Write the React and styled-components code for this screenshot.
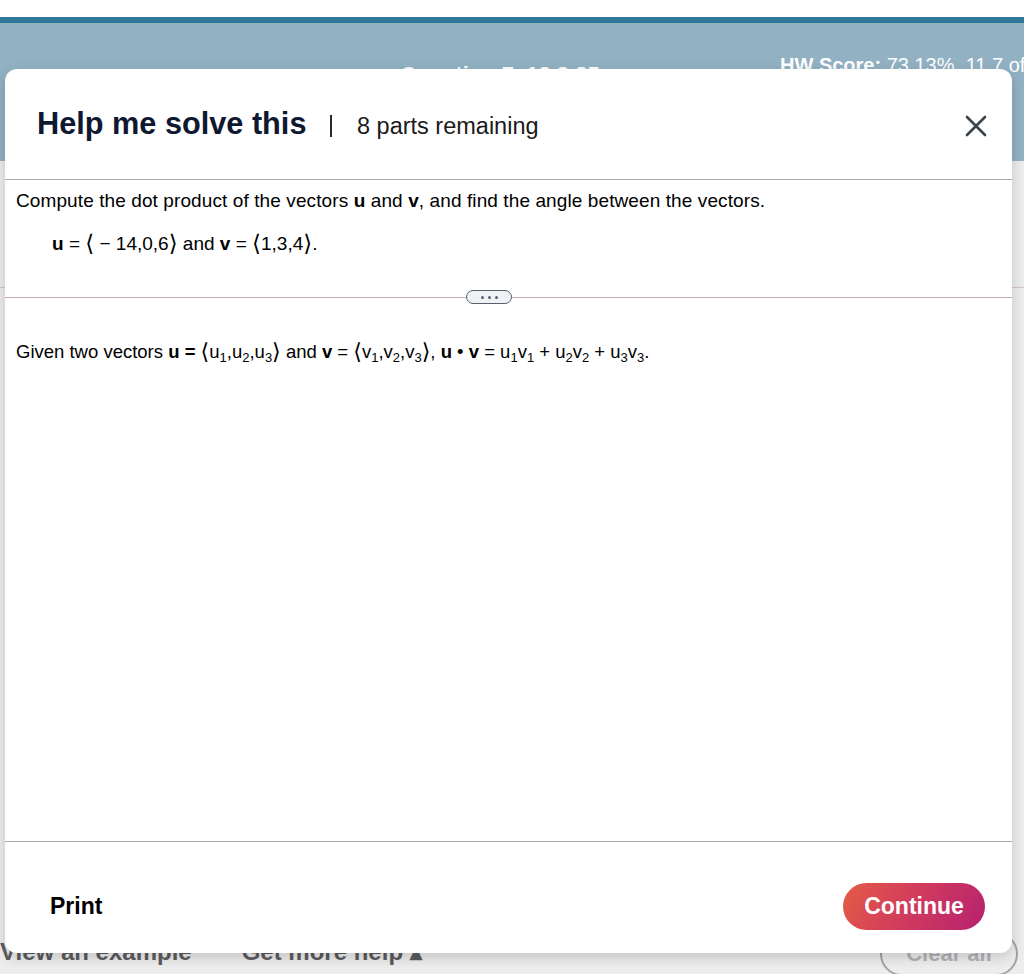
import React from 'react';
import styled, { createGlobalStyle } from 'styled-components';

const GlobalStyle = createGlobalStyle`
  html, body { margin: 0; padding: 0; }
  body {
    font-family: "Liberation Sans", Arial, Helvetica, sans-serif;
    background: #ffffff;
  }
`;

const Page = styled.div`
  position: relative;
  width: 1024px;
  height: 974px;
  overflow: hidden;
  display: flex;
  flex-direction: column;
  background: #ededee;
`;

const TopStrip = styled.div`
  flex: none;
  height: 17px;
  background: #ffffff;
`;

const AccentBar = styled.div`
  flex: none;
  height: 6px;
  background: #2f7898;
`;

const HeaderBand = styled.header`
  flex: none;
  height: 138px;
  background: #92b2c4;
  display: grid;
  grid-template-columns: 380px 240px 1fr;
  align-items: start;
  padding-top: 31px;
  box-sizing: border-box;
  color: #ffffff;
  white-space: nowrap;
  overflow: hidden;
`;

const QuestionTitle = styled.div`
  grid-column: 2;
  justify-self: center;
  margin-top: 8px;
  font-size: 22px;
  font-weight: bold;
`;

const Score = styled.div`
  grid-column: 3;
  padding-left: 160px;
  font-size: 20px;
  overflow: hidden;
  b { font-weight: bold; }
`;

const Content = styled.main`
  flex: 1;
  display: flex;
  flex-direction: column;
  padding-top: 126px;
`;

const BgDivider = styled.div`
  height: 1px;
  background: #d6c4cb;
`;

const BottomBar = styled.div`
  margin-top: auto;
  height: 42px;
  display: flex;
  align-items: flex-start;
  padding: 0 6px 0 0;
  white-space: nowrap;
`;

const BgLink = styled.span`
  font-size: 24px;
  font-weight: bold;
  color: #5c5c5e;
  margin-top: 6px;
  margin-left: ${p => p.$ml || 0}px;
`;

const ClearButton = styled.span`
  margin-left: auto;
  width: 138px;
  height: 44px;
  box-sizing: border-box;
  border: 2px solid #a3a3a5;
  border-radius: 22px;
  color: #b4b4b6;
  font-size: 22px;
  font-weight: bold;
  display: flex;
  align-items: center;
  justify-content: center;
`;

const Modal = styled.div`
  position: absolute;
  top: 69px;
  left: 5px;
  width: 1007px;
  height: 884px;
  background: #ffffff;
  border-radius: 12px;
  box-shadow: 0 4px 14px rgba(0, 0, 0, 0.18);
  display: flex;
  flex-direction: column;
  overflow: hidden;
`;

const ModalHeader = styled.div`
  flex: none;
  height: 111px;
  box-sizing: border-box;
  border-bottom: 1px solid #a9a9b3;
  display: flex;
  align-items: center;
  padding: 0 24px 0 32px;
`;

const Title = styled.h2`
  margin: 0;
  font-size: 30.7px;
  font-weight: bold;
  color: #0e1830;
`;

const Separator = styled.span`
  width: 1.5px;
  height: 22px;
  background: #2a2a2a;
  margin: 4px 25px 0 24px;
`;

const Remaining = styled.span`
  font-size: 23.5px;
  color: #1a1a1a;
  margin-top: 4px;
`;

const CloseButton = styled.button`
  margin-left: auto;
  margin-top: 4px;
  border: 0;
  background: transparent;
  padding: 0;
  width: 24px;
  height: 24px;
  display: flex;
  align-items: center;
  justify-content: center;
  cursor: pointer;
`;

const ModalBody = styled.div`
  flex: 1;
  display: flex;
  flex-direction: column;
`;

const QuestionSection = styled.section`
  position: relative;
  height: 118px;
  box-sizing: border-box;
  border-bottom: 1px solid #c4a9b4;
  padding: 10px 0 0 11px;
  color: #000;
`;

const Prompt = styled.p`
  margin: 0;
  font-size: 19px;
  letter-spacing: 0.1px;
  line-height: 22px;
  white-space: nowrap;
`;

const MathLine = styled.p`
  margin: 20px 0 0 36px;
  font-size: 19px;
  line-height: 24px;
  white-space: nowrap;
`;

const Bracket = styled.span`
  font-family: "DejaVu Sans", sans-serif;
  font-size: 1.2em;
  font-weight: normal;
  line-height: 0;
  vertical-align: -1px;
`;

const MorePill = styled.span`
  position: absolute;
  left: 461px;
  bottom: -7px;
  width: 46px;
  height: 14px;
  box-sizing: border-box;
  border: 1.5px solid #596170;
  border-radius: 7px;
  background: #eff1f4;
  display: flex;
  align-items: center;
  justify-content: center;
  gap: 4px;
`;

const Dot = styled.i`
  width: 3px;
  height: 3px;
  border-radius: 50%;
  background: #596170;
`;

const HintSection = styled.p`
  margin: 0;
  padding: 42px 0 0 11px;
  font-size: 18.5px;
  line-height: 24px;
  color: #000;
  white-space: nowrap;

  sub {
    font-size: 13px;
    vertical-align: -4px;
    line-height: 0;
  }
`;

const ModalFooter = styled.footer`
  flex: none;
  height: 112px;
  box-sizing: border-box;
  border-top: 1px solid #a9a9b3;
  display: flex;
  align-items: center;
  justify-content: space-between;
  padding: 17px 27px 0 45px;
`;

const PrintButton = styled.button`
  border: 0;
  background: transparent;
  padding: 0;
  font-family: inherit;
  font-size: 23px;
  font-weight: bold;
  color: #000;
  cursor: pointer;
`;

const ContinueButton = styled.button`
  width: 142px;
  height: 47px;
  border: 0;
  border-radius: 24px;
  background: linear-gradient(120deg, #e45c45 0%, #d03a5e 50%, #b5216f 100%);
  color: #ffffff;
  font-family: inherit;
  font-size: 23px;
  font-weight: bold;
  cursor: pointer;
`;

const L = () => <Bracket>⟨</Bracket>;
const R = () => <Bracket>⟩</Bracket>;

export default function App() {
  return (
    <>
      <GlobalStyle />
      <Page>
        <TopStrip />
        <AccentBar />
        <HeaderBand>
          <QuestionTitle>Question 7, 12.3.25</QuestionTitle>
          <Score><b>HW Score:</b> 73.13%, 11.7 of 16 points</Score>
        </HeaderBand>
        <Content>
          <BgDivider />
          <BottomBar>
            <BgLink>View an example</BgLink>
            <BgLink $ml={50}>Get more help ▴</BgLink>
            <ClearButton>Clear all</ClearButton>
          </BottomBar>
        </Content>

        <Modal role="dialog" aria-label="Help me solve this">
          <ModalHeader>
            <Title>Help me solve this</Title>
            <Separator />
            <Remaining>8 parts remaining</Remaining>
            <CloseButton aria-label="Close">
              <svg width="22" height="22" viewBox="0 0 22 22">
                <path d="M2 2 L20 20 M20 2 L2 20" stroke="#3b424d" strokeWidth="2.6" strokeLinecap="round" />
              </svg>
            </CloseButton>
          </ModalHeader>
          <ModalBody>
            <QuestionSection>
              <Prompt>
                Compute the dot product of the vectors <b>u</b> and <b>v</b>, and find the angle between the vectors.
              </Prompt>
              <MathLine>
                <b>u</b> = <L /> − 14,0,6<R /> and <b>v</b> = <L />1,3,4<R />.
              </MathLine>
              <MorePill><Dot /><Dot /><Dot /></MorePill>
            </QuestionSection>
            <HintSection>
              Given two vectors <b>u</b> <b>=</b> <L />u<sub>1</sub>,u<sub>2</sub>,u<sub>3</sub><R /> and <b>v</b> = <L />v<sub>1</sub>,v<sub>2</sub>,v<sub>3</sub><R />, <b>u</b> • <b>v</b> = u<sub>1</sub>v<sub>1</sub> + u<sub>2</sub>v<sub>2</sub> + u<sub>3</sub>v<sub>3</sub>.
            </HintSection>
          </ModalBody>
          <ModalFooter>
            <PrintButton>Print</PrintButton>
            <ContinueButton>Continue</ContinueButton>
          </ModalFooter>
        </Modal>
      </Page>
    </>
  );
}
